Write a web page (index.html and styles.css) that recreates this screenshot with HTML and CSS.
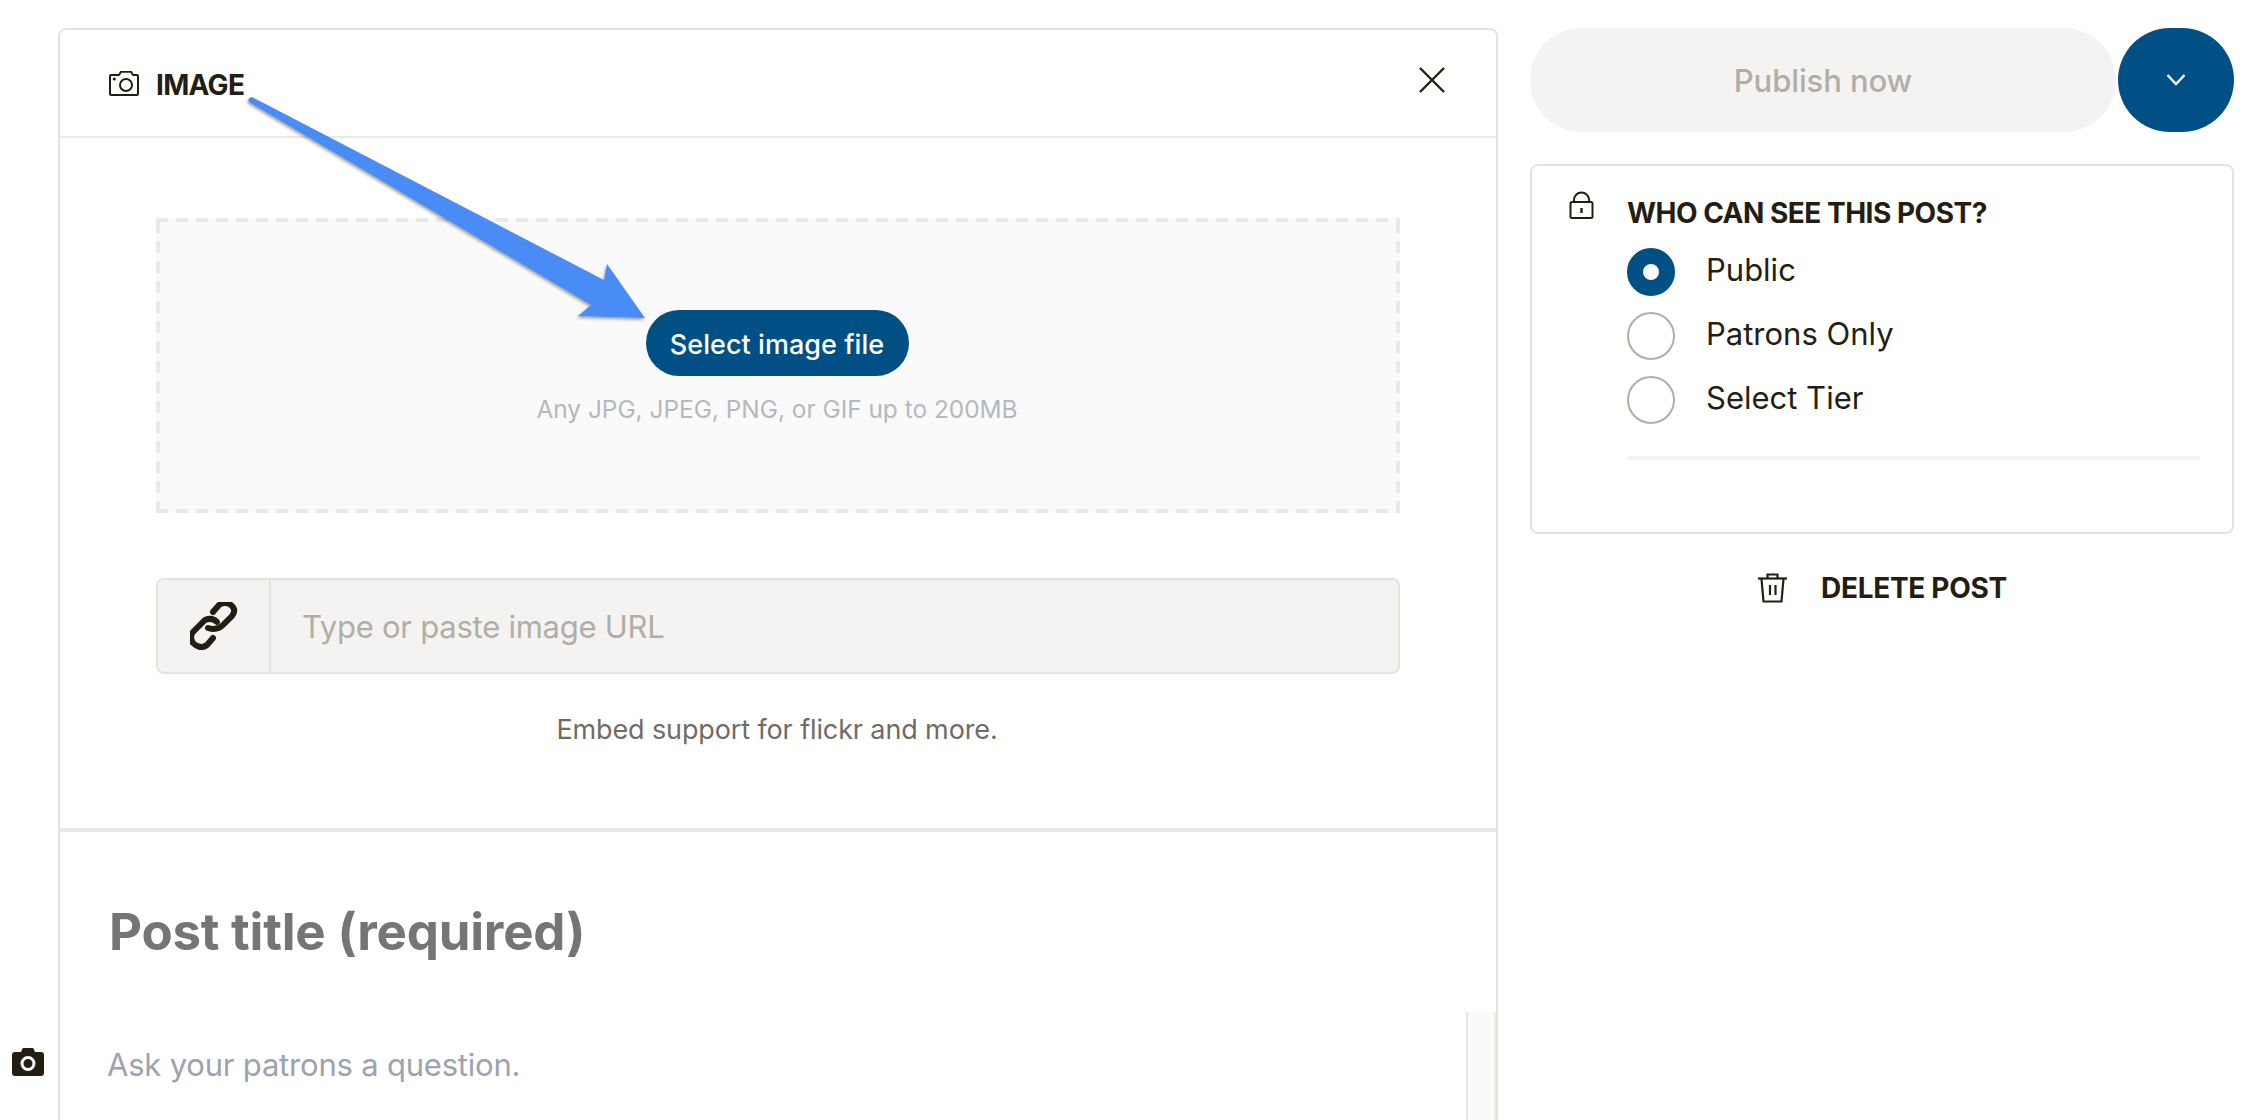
FILE: index.html
```html
<!DOCTYPE html>
<html lang="en">
<head>
<meta charset="utf-8">
<title>Create post</title>
<link rel="stylesheet" href="styles.css">
</head>
<body>
<div class="page">
  <main class="card">
    <header class="card-head">
      <div class="head-title">
        <svg class="icon-cam" viewBox="9 7 30 25" fill="none" stroke="#241e12" stroke-width="2"><path d="M11 11h8l2-3.200h10l2 3.200h4a1 1 0 0 1 1 1v18a1 1 0 0 1-1 1H11a1 1 0 0 1-1-1V12a1 1 0 0 1 1-1z" stroke-linejoin="round"/><circle cx="26" cy="21" r="6"/><circle cx="14.300" cy="15" r="1.600" fill="#241e12" stroke="none"/></svg>
        <span class="head-label">IMAGE</span>
      </div>
      <svg class="icon-close" viewBox="0 0 26 26" stroke="#241e12" stroke-width="2.400" fill="none"><path d="M1 1l24 24M25 1L1 25"/></svg>
    </header>
    <section class="upload">
      <div class="dropzone">
        <button class="select-btn" type="button">Select image file</button>
        <p class="hint">Any JPG, JPEG, PNG, or GIF up to 200MB</p>
      </div>
      <div class="url-field">
        <div class="url-icon">
          <svg viewBox="10 7 48 48" width="48" height="48" fill="none" stroke="#241e12" stroke-width="6" stroke-linecap="round"><path d="M33 17L39 10Q45 6 51 10Q57 15 52 21L43 30Q37 36 28 33"/><path d="M37 27Q32 22 25 25L13 37Q9 42 13 48Q20 55 27 50L33 43"/></svg>
        </div>
        <div class="url-text">Type or paste image URL</div>
      </div>
      <p class="embed">Embed support for flickr and more.</p>
    </section>
    <section class="editor">
      <div class="editor-main">
        <h1 class="post-title">Post title (required)</h1>
        <p class="prompt">Ask your patrons a question.</p>
      </div>
      <div class="scrollbar"></div>
    </section>
  </main>
  <aside class="side">
    <div class="publish-row">
      <div class="publish">Publish now</div>
      <div class="publish-menu">
        <svg viewBox="0 0 20 14" width="20" height="14" fill="none" stroke="#fff" stroke-width="2.400"><path d="M1.500 2l8.500 9 8.500-9"/></svg>
      </div>
    </div>
    <div class="access">
      <svg class="icon-lock" viewBox="9 6 25 29" fill="none" stroke="#241e12" stroke-width="2"><rect x="10.500" y="17" width="22" height="16" rx="1.500"/><path d="M14 17V15a7.500 7.500 0 0 1 15 0v2"/><path d="M21.500 23v5" stroke-width="2.400"/></svg>
      <div class="access-body">
        <h2 class="access-title">WHO CAN SEE THIS POST?</h2>
        <div class="option"><span class="radio on"></span><span class="option-label">Public</span></div>
        <div class="option"><span class="radio"></span><span class="option-label">Patrons Only</span></div>
        <div class="option"><span class="radio"></span><span class="option-label">Select Tier</span></div>
        <div class="rule"></div>
      </div>
    </div>
    <div class="delete">
      <svg class="icon-trash" viewBox="7 8 31 30" fill="none" stroke="#241e12" stroke-width="2.200"><path d="M8 13.500H37"/><path d="M17.500 13v-3.500h10V13"/><path d="M11.500 14l2 22.500h18l2-22.500"/><path d="M20 20v10M25.500 20v10"/></svg>
      <span>DELETE POST</span>
    </div>
  </aside>
  <svg class="arrow" viewBox="0 0 2262 1120" aria-hidden="true">
    <defs><filter id="sh" x="-10%" y="-10%" width="120%" height="120%"><feDropShadow dx="-1" dy="2" stdDeviation="1.500" flood-color="#333" flood-opacity=".45"/></filter></defs>
    <path filter="url(#sh)" fill="#4a8cf5" d="M252 97L604 280L607 264L645 318L578 316L591 305L249 102Q247 98 252 97Z"/>
  </svg>
  <svg class="float-cam" viewBox="0 0 32 28"><path fill="#241e12" fill-rule="evenodd" d="M9 4l1.500-3.500a1 1 0 0 1 1-.500h9a1 1 0 0 1 1 .500L23 4h6a3 3 0 0 1 3 3v18a3 3 0 0 1-3 3H3a3 3 0 0 1-3-3V7a3 3 0 0 1 3-3zM16 8a7.500 7.500 0 1 0 0 15 7.500 7.500 0 0 0 0-15zM16 11a4.500 4.500 0 1 1 0 9 4.500 4.500 0 0 1 0-9z"/></svg>
</div>
</body>
</html>
```
FILE: styles.css
```css
* { box-sizing: border-box; }
html, body { margin: 0; height: 100%; background: #fff; overflow: hidden; }
body { font-family: Inter, "Liberation Sans", sans-serif; color: #241e12; }
.page { position: relative; width: 2262px; height: 1120px; display: flex; gap: 32px; padding: 28px 28px 0 58px; overflow: hidden; }

.card { width: 1440px; height: 1100px; flex: none; border: 2px solid #e5e3dd; border-radius: 8px 8px 0 0; background: #fff; display: flex; flex-direction: column; }
.card-head { height: 108px; flex: none; display: flex; align-items: center; justify-content: space-between; padding: 0 51px 2px 49px; border-bottom: 2px solid #e8eaea; }
.head-title { display: flex; align-items: center; gap: 17px; margin-top: 3px; font-size: 28px; font-weight: 700; letter-spacing: -.7px; }
.head-label { padding-top: 2px; }
.icon-cam { width: 30px; height: 25px; }
.icon-close { width: 26px; height: 26px; margin-top: -4px; }

.upload { height: 694px; flex: none; padding: 80px 96px 0; border-bottom: 4px solid #e8eaea; }
.dropzone {
  height: 295px; display: flex; flex-direction: column; align-items: center; padding-top: 92px;
  background-color: #fafafa;
  background-image:
    repeating-linear-gradient(90deg, #e8eaea 0 12px, transparent 12px 20px),
    repeating-linear-gradient(90deg, #e8eaea 0 12px, transparent 12px 20px),
    repeating-linear-gradient(0deg, #e8eaea 0 12px, transparent 12px 20px),
    repeating-linear-gradient(0deg, #e8eaea 0 12px, transparent 12px 20px);
  background-size: 100% 4px, 100% 4px, 4px 100%, 4px 100%;
  background-position: 0 0, 0 100%, 0 0, 100% 0;
  background-repeat: no-repeat;
}
.select-btn { width: 263px; height: 66px; margin-right: 2px; border: 0; border-radius: 33px; background: #004f85; color: #fff; font: 500 27px Inter, "Liberation Sans", sans-serif; padding: 2px 0 0; letter-spacing: .05px; }
.hint { margin: 18px 2px 0 0; font-size: 24.400px; line-height: 30px; color: #b4b9bd; }
.url-field { margin-top: 65px; height: 96px; display: flex; background: #f4f3f1; border: 2px solid #e5e3dd; border-radius: 8px; }
.url-icon { width: 113px; flex: none; display: flex; align-items: center; justify-content: center; border-right: 2px solid #e5e3dd; }
.url-text { padding-left: 31px; font-size: 31px; line-height: 93px; color: #b1aea7; letter-spacing: -.25px; }
.embed { margin: 36px 0 0; padding-right: 2px; text-align: center; font-size: 27px; line-height: 40px; color: #6f6c66; letter-spacing: -.12px; }

.editor { flex: 1; display: flex; min-height: 0; }
.editor-main { flex: 1; padding: 0 0 0 47px; }
.post-title { margin: 70px 0 0 2px; font-size: 51px; line-height: 60px; font-weight: 700; color: #757575; letter-spacing: -.22px; }
.prompt { margin: 83px 0 0; font-size: 31px; line-height: 40px; color: #9ca3af; letter-spacing: -.2px; }
.scrollbar { width: 30px; height: 108px; margin-top: 180px; background: #fafafa; border-left: 2px solid #e6e6e6; border-right: 2px solid #ebebe9; }

.side { width: 704px; flex: none; display: flex; flex-direction: column; }
.publish-row { display: flex; gap: 2px; height: 104px; }
.publish { flex: 1; border-radius: 52px; background: #f4f3f1; color: #b1aea7; font-size: 31px; font-weight: 500; letter-spacing: -.1px; display: flex; align-items: center; justify-content: center; }
.publish-menu { width: 116px; border-radius: 52px; background: #004f85; display: flex; align-items: center; justify-content: center; }
.access { margin-top: 32px; height: 370px; border: 2px solid #e5e3dd; border-radius: 8px; display: flex; padding: 25px 32px 0 37px; }
.icon-lock { width: 25px; height: 29px; flex: none; }
.access-body { margin-left: 33px; padding-top: 1px; flex: 1; }
.access-title { margin: 4px 0 0; font-size: 28px; line-height: 34px; font-weight: 700; letter-spacing: -.5px; }
.option { display: flex; align-items: center; gap: 31px; height: 48px; margin-top: 16px; font-size: 31px; }
.access-title + .option { margin-top: 18px; }
.option-label { padding-bottom: 6px; }
.radio { width: 48px; height: 48px; flex: none; border-radius: 50%; border: 2px solid #b1aea7; background: #fff; }
.radio.on { border: 16px solid #004f85; }
.rule { margin-top: 32px; height: 4px; background: #f4f3f1; }
.delete { margin-top: 39px; height: 30px; display: flex; align-items: center; justify-content: center; gap: 33px; font-size: 28px; font-weight: 700; letter-spacing: -.3px; }
.icon-trash { width: 31px; height: 30px; }

.arrow { position: absolute; inset: 0; width: 2262px; height: 1120px; pointer-events: none; }
.float-cam { position: absolute; left: 12px; top: 1048px; width: 32px; height: 28px; }
```
